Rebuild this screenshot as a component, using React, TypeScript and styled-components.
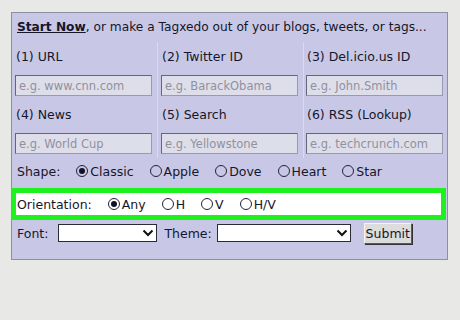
import React from "react";
import styled, { createGlobalStyle } from "styled-components";

const Global = createGlobalStyle`
  html, body { margin: 0; padding: 0; background: #e8e8e6; }
  body { font-family: "DejaVu Sans", Verdana, sans-serif; color: #16162a; }
`;

const Page = styled.div`
  width: 460px;
  height: 320px;
  padding: 12px 0 0 11px;
  box-sizing: border-box;
`;

const Panel = styled.div`
  width: 437px;
  height: 248px;
  box-sizing: border-box;
  background: #c8c8e6;
  border: 1px solid #8e8ea2;
  display: flex;
  flex-direction: column;
`;

const Header = styled.div`
  height: 29px;
  padding: 0 0 0 5px;
  font-size: 12.2px;
  line-height: 29px;
  white-space: nowrap;
  b { text-decoration: underline; }
`;

const Grid = styled.div`
  display: grid;
  grid-template-columns: 145px 146px 1fr;
`;

const Cell = styled.div<{ $col: number }>`
  padding: 7px 0 4px ${(p) => (p.$col === 2 ? 2 : 3)}px;
  border-left: ${(p) => (p.$col === 0 ? "none" : "1px solid #dadaec")};
  display: flex;
  flex-direction: column;
`;

const Label = styled.div`
  font-size: 12.5px;
  line-height: 16px;
  height: 16px;
  padding-left: 1px;
  margin-bottom: 10px;
  white-space: nowrap;
`;

const Input = styled.input`
  width: 137px;
  height: 21px;
  box-sizing: border-box;
  margin: 0;
  padding: 0 3px;
  background: #dedeea;
  border: 1px solid #66667a;
  border-right-color: #9a9aae;
  border-bottom-color: #9a9aae;
  font-family: "DejaVu Sans", Verdana, sans-serif;
  font-size: 11.5px;
  outline: none;
  &::placeholder { color: #90909e; }
`;

const OptionRow = styled.div<{ $gap: number }>`
  display: flex;
  align-items: center;
  gap: ${(p) => p.$gap}px;
  font-size: 12.5px;
  white-space: nowrap;
`;

const ShapeRow = styled(OptionRow)`
  height: 26px;
  padding-left: 5px;
`;

const Highlight = styled.div`
  margin: 4px 0 0 -1px;
  width: 435px;
  height: 32px;
  box-sizing: border-box;
  border: 5px solid #1ef21e;
  background: #ffffff;
  display: flex;
  align-items: center;
`;

const OrientRow = styled(OptionRow)`
  padding-left: 1px;
`;

const Option = styled.span`
  display: inline-flex;
  align-items: center;
  gap: 2px;
`;

const Radio = styled.span<{ $on?: boolean }>`
  width: 12px;
  height: 12px;
  box-sizing: border-box;
  border: 1px solid #22223a;
  border-radius: 50%;
  display: inline-flex;
  align-items: center;
  justify-content: center;
  &::after {
    content: "";
    width: 6px;
    height: 6px;
    border-radius: 50%;
    background: ${(p) => (p.$on ? "#111122" : "transparent")};
  }
`;

const Bottom = styled.div`
  display: flex;
  align-items: center;
  height: 24px;
  margin-top: 1px;
  padding-left: 5px;
  font-size: 12.5px;
  white-space: nowrap;
`;

const Select = styled.div<{ $w: number; $ml: number }>`
  width: ${(p) => p.$w}px;
  margin-left: ${(p) => p.$ml}px;
  height: 18px;
  box-sizing: border-box;
  background: #ffffff;
  border: 1px solid #2a2a3a;
  display: flex;
  justify-content: flex-end;
  align-items: center;
  padding-right: 2px;
`;

const ThemeLabel = styled.span`
  margin-left: 7px;
`;

const Button = styled.button`
  margin-left: 13px;
  width: 48px;
  height: 21px;
  box-sizing: border-box;
  padding: 0;
  background: #dcdcdc;
  border: 1px solid #5a5a5a;
  border-top-color: #f4f4f4;
  border-left-color: #f4f4f4;
  box-shadow: 1px 1px 0 #333;
  font-family: "DejaVu Sans", Verdana, sans-serif;
  font-size: 12.5px;
  color: #16162a;
`;

const Chevron = () => (
  <svg width="12" height="10" viewBox="0 0 12 10">
    <path d="M1.5 2.5 L6 7 L10.5 2.5" fill="none" stroke="#111" strokeWidth="2" />
  </svg>
);

const fields = [
  ["(1) URL", "e.g. www.cnn.com"],
  ["(2) Twitter ID", "e.g. BarackObama"],
  ["(3) Del.icio.us ID", "e.g. John.Smith"],
  ["(4) News", "e.g. World Cup"],
  ["(5) Search", "e.g. Yellowstone"],
  ["(6) RSS (Lookup)", "e.g. techcrunch.com"],
];

const shapes = ["Classic", "Apple", "Dove", "Heart", "Star"];
const orients = ["Any", "H", "V", "H/V"];

export default function App() {
  return (
    <Page>
      <Global />
      <Panel>
        <Header>
          <b>Start Now</b>, or make a Tagxedo out of your blogs, tweets, or tags...
        </Header>
        <Grid>
          {fields.map(([l, ph], i) => (
            <Cell key={l} $col={i % 3}>
              <Label>{l}</Label>
              <Input placeholder={ph} readOnly />
            </Cell>
          ))}
        </Grid>
        <ShapeRow $gap={16}>
          <span>Shape:</span>
          {shapes.map((s, i) => (
            <Option key={s}>
              <Radio $on={i === 0} />
              {s}
            </Option>
          ))}
        </ShapeRow>
        <Highlight>
          <OrientRow $gap={16}>
            <span>Orientation:</span>
            {orients.map((s, i) => (
              <Option key={s}>
                <Radio $on={i === 0} />
                {s}
              </Option>
            ))}
          </OrientRow>
        </Highlight>
        <Bottom>
          <span>Font:</span>
          <Select $w={99} $ml={10}>
            <Chevron />
          </Select>
          <ThemeLabel>Theme:</ThemeLabel>
          <Select $w={134} $ml={5}>
            <Chevron />
          </Select>
          <Button>Submit</Button>
        </Bottom>
      </Panel>
    </Page>
  );
}
